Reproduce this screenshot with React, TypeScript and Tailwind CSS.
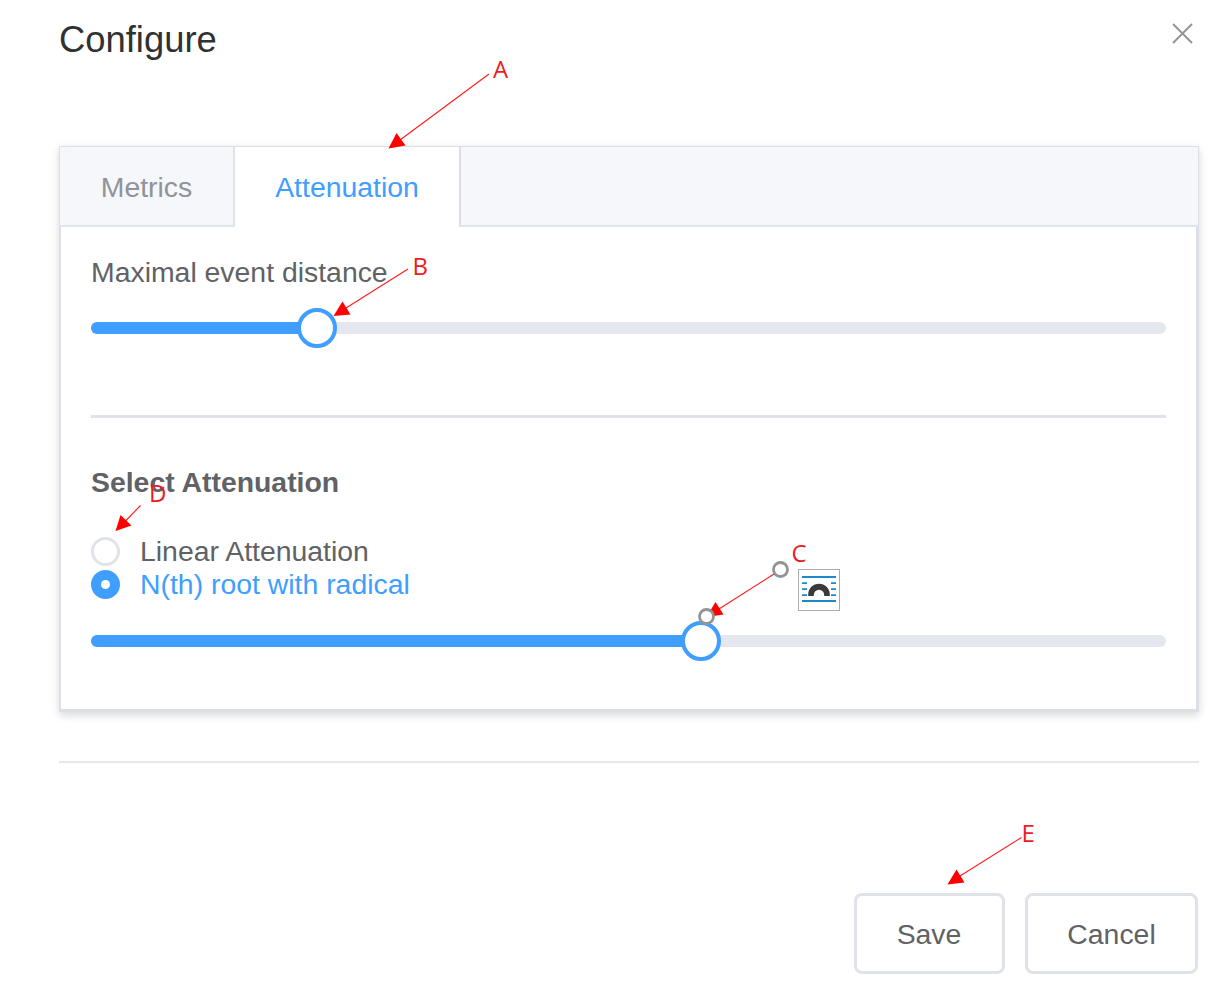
import React, { useState } from "react";

function Slider({ value }: { value: number }) {
  return (
    <div className="relative h-3 w-[1075px] rounded-full bg-[#e4e7ed]">
      <div className="h-3 rounded-l-full bg-[#409eff]" style={{ width: `${value}%` }} />
      <div
        className="absolute -top-[14px] size-10 -translate-x-1/2 rounded-full border-4 border-[#409eff] bg-white"
        style={{ left: `${value}%` }}
      />
    </div>
  );
}

function Radio({ label, checked, onSelect }: { label: string; checked: boolean; onSelect: () => void }) {
  return (
    <button type="button" role="radio" aria-checked={checked} onClick={onSelect} className="flex h-[33px] items-center gap-5">
      {checked ? (
        <span className="mt-0.5 flex size-[29px] items-center justify-center rounded-full bg-[#409eff] pr-px pb-px">
          <span className="size-[9px] rounded-full bg-white" />
        </span>
      ) : (
        <span className="mt-0.5 size-[29px] rounded-full border-3 border-[#e0e3e9] bg-white" />
      )}
      <span className={checked ? "text-[#409eff]" : "text-[#606266]"}>{label}</span>
    </button>
  );
}

const arrows = [
  { label: "A", x: 493, y: 78, line: [489, 74, 400, 140], head: "388.5,148.5 396.5,133 405.5,145.5" },
  { label: "B", x: 412.5, y: 275, line: [408, 269, 346, 308], head: "333.5,316 342.5,301.5 350.5,314.5" },
  { label: "C", x: 791.5, y: 562, line: [774, 574, 719, 609], head: "706.5,617 715.5,602 723.5,614.5" },
  { label: "D", x: 149, y: 502, line: [140.5, 505.5, 126, 520.5], head: "115.5,531 120.5,515 131.5,525.5" },
  { label: "E", x: 1021.5, y: 842, line: [1021.5, 837.5, 960, 876], head: "947.5,884.5 956.5,869.5 964.5,882.5" },
];

function Annotations() {
  return (
    <svg className="pointer-events-none absolute inset-0" width="1232" height="990" viewBox="0 0 1232 990">
      {arrows.map(({ label, x, y, line, head }) => (
        <g key={label}>
          <line x1={line[0]} y1={line[1]} x2={line[2]} y2={line[3]} stroke="#ff1a1a" strokeWidth="1.1" />
          <polygon points={head} fill="#ff0000" />
          <text x={x} y={y} fill="#ed1c24" fontSize="24" fontFamily="'Open Sans', sans-serif">{label}</text>
        </g>
      ))}
      <g fill="#fff" stroke="#949494" strokeWidth="2.8">
        <circle cx="780.5" cy="569.5" r="7" />
        <circle cx="706.5" cy="616.5" r="7" />
      </g>
      <rect x="798.5" y="569.5" width="41" height="41" fill="#fff" stroke="#ababab" />
      <g stroke="#1e88cb" strokeWidth="1.8">
        <path d="M802 577H836M802 601H836M802 583.2H807M831 583.2H836M802 589.2H807M831 589.2H836M802 595.2H807M831 595.2H836" />
      </g>
      <path d="M808.2 596V594.5a10.8 10.8 0 0 1 21.6 0V596H824.2V595a5.2 5.2 0 0 0-10.4 0V596Z" fill="#3b3a39" />
    </svg>
  );
}

export default function App() {
  const [mode, setMode] = useState("root");
  return (
    <main className="relative h-[990px] w-[1232px] overflow-hidden bg-white pl-[59px] font-['Liberation_Sans',Arial,sans-serif] text-[28.4px] leading-8 text-[#606266]">
      <header className="flex h-[146px] w-[1140px] items-start justify-between">
        <h1 className="pt-5 text-[36.4px] leading-10 text-[#303133]">Configure</h1>
        <button type="button" aria-label="Close" className="mt-[23px] mr-[6px]">
          <svg width="21" height="21" viewBox="0 0 21 21" stroke="#909399" strokeWidth="1.9">
            <path d="M1 1 20 20M20 1 1 20" />
          </svg>
        </button>
      </header>
      <section className="h-[566px] w-[1140px] border-2 border-t border-r-3 border-b-3 border-[#dcdfe6] bg-white shadow-[0_4px_8px_rgba(0,0,0,0.12),0_0_12px_rgba(0,0,0,0.04)]">
        <nav className="-ml-px flex h-20 w-[1138px]">
          <button type="button" className="w-[175px] border-r-2 border-b-2 border-[#dfe3eb] bg-[#f5f7fa] pt-0.5 text-[#909399]">Metrics</button>
          <button type="button" className="w-[226px] border-r-2 border-[#dcdfe6] bg-white text-[#409eff]">Attenuation</button>
          <div className="flex-1 border-b-2 border-[#dfe3eb] bg-[#f5f7fa]" />
        </nav>
        <div className="flex flex-col pl-[30px]">
          <div className="mt-[29px] h-8">Maximal event distance</div>
          <div className="mt-[34px]"><Slider value={21.05} /></div>
          <hr className="mt-[81px] w-[1075px] border-t-3 border-[#dfe2e9]" />
          <h2 className="mt-[48px] h-8 font-bold">Select Attenuation</h2>
          <div role="radiogroup" className="mt-9 flex flex-col items-start">
            <Radio label="Linear Attenuation" checked={mode === "linear"} onSelect={() => setMode("linear")} />
            <Radio label="N(th) root with radical" checked={mode === "root"} onSelect={() => setMode("root")} />
          </div>
          <div className="mt-[35px]"><Slider value={56.7} /></div>
        </div>
      </section>
      <hr className="mt-[49px] w-[1140px] border-t-2 border-[#e4e7ed]" />
      <footer className="mt-[130px] flex w-[1140px] justify-end gap-5 pr-px">
        <button type="button" className="h-[81px] w-[151px] rounded-lg border-3 border-[#dfe2e9] pr-px">Save</button>
        <button type="button" className="h-[81px] w-[173px] rounded-lg border-3 border-[#dfe2e9]">Cancel</button>
      </footer>
      <Annotations />
    </main>
  );
}
